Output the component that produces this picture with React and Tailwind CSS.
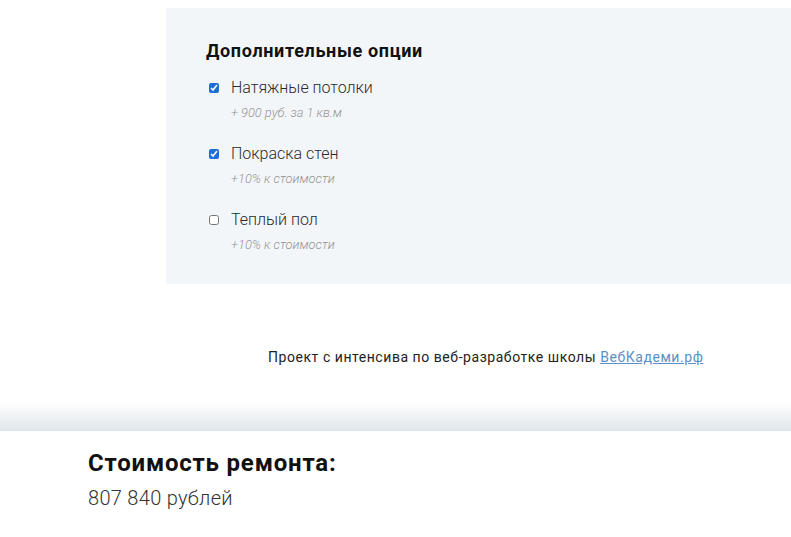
import React, { useState } from "react";

const OPTIONS = [
  { id: "ceiling", title: "Натяжные потолки", note: "+ 900 руб. за 1 кв.м", checked: true },
  { id: "walls", title: "Покраска стен", note: "+10% к стоимости", checked: true },
  { id: "floor", title: "Теплый пол", note: "+10% к стоимости", checked: false },
];

export default function App() {
  const [values, setValues] = useState(
    Object.fromEntries(OPTIONS.map((o) => [o.id, o.checked]))
  );

  return (
    <div className="relative h-[537px] overflow-hidden bg-white font-['Roboto',sans-serif] text-[#222]">
      {/* Options panel */}
      <div className="ml-[166px] mt-2 h-[276px] bg-[#f3f6f9] pl-10 pt-[31px]">
        <h3 className="text-[18px] leading-6 font-bold tracking-[0.65px] text-[#111]">Дополнительные опции</h3>
        <div className="mt-[13px] flex flex-col gap-[21px]">
          {OPTIONS.map((o) => (
            <label key={o.id} className="block cursor-pointer">
              <div className="flex items-center h-6">
                <input
                  type="checkbox"
                  checked={values[o.id]}
                  onChange={() => setValues((v) => ({ ...v, [o.id]: !v[o.id] }))}
                  className="ml-[3px] h-[10px] w-[10px] accent-[#1a6fd8]"
                />
                <span className="ml-[12px] text-[16px] font-light text-[#2a2a2a]">{o.title}</span>
              </div>
              <div className="mt-[5px] pl-[25px] text-[12.8px] leading-4 italic font-light text-[#949494]">
                {o.note}
              </div>
            </label>
          ))}
        </div>
      </div>

      {/* Credits */}
      <p className="mt-[63px] pl-[268px] text-[14px] leading-5 tracking-[0.55px] text-[#222]">
        Проект с интенсива по веб-разработке школы{" "}
        <a href="#" className="text-[#5b8fc7] underline">ВебКадеми.рф</a>
      </p>

      {/* Fixed total bar */}
      <div className="absolute bottom-0 left-0 right-0">
        <div className="h-[29px] bg-gradient-to-b from-[#ffffff] to-[#dfe6eb]" />
        <div className="h-[106px] bg-white pl-[88px] pt-4">
          <div className="text-[24px] leading-8 font-bold tracking-[0.8px] text-[#111]">Стоимость ремонта:</div>
          <div className="mt-[5px] text-[20px] leading-7 font-light tracking-[0.3px] text-[#333]">807 840 рублей</div>
        </div>
      </div>
    </div>
  );
}
